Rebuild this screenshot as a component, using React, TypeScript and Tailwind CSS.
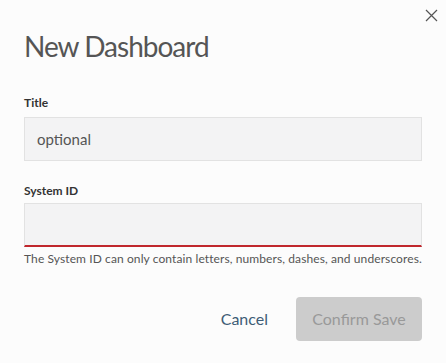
import React from "react";

export default function App() {
  return (
    <div
      className="relative w-[446px] h-[363px] bg-[#fcfcfc] px-6 text-[#555]"
      style={{ fontFamily: 'Lato, "Noto Sans", sans-serif' }}
    >
      <button className="absolute right-[8px] top-[8px] w-[14px] h-[14px] flex items-center justify-center text-[#555]">
        <svg width="13" height="13" viewBox="0 0 13 13" fill="none" stroke="currentColor" strokeWidth="1.2">
          <path d="M1 1L12 12M12 1L1 12" />
        </svg>
      </button>
      <div className="pt-[26px] text-[28px] leading-[40px] text-[#555] tracking-[-1px]">New Dashboard</div>
      <div className="mt-[29px] text-[12px] leading-[16px] font-bold text-[#333]">Title</div>
      <div className="mt-[6px] h-[44px] bg-[#f3f3f4] border border-[#e2e2e2] flex items-center px-3 text-[15px] text-[#555]">
        optional
      </div>
      <div className="mt-[22px] text-[12px] leading-[16px] font-bold text-[#333]">System ID</div>
      <div className="mt-[4px] h-[44px] bg-[#f3f3f4] border border-[#e2e2e2] border-b-2 border-b-[#c0272d]" />
      <div className="mt-[4px] text-[12px] leading-[16px] text-[#555] whitespace-nowrap tracking-[0.1px]">
        The System ID can only contain letters, numbers, dashes, and underscores.
      </div>
      <div className="mt-[30px] flex items-center justify-end gap-[28px]">
        <button className="text-[16px] text-[#3e5c76]">Cancel</button>
        <button className="w-[126px] h-[44px] rounded-[4px] bg-[#cccccc] text-[16px] text-[#999]">Confirm Save</button>
      </div>
    </div>
  );
}
